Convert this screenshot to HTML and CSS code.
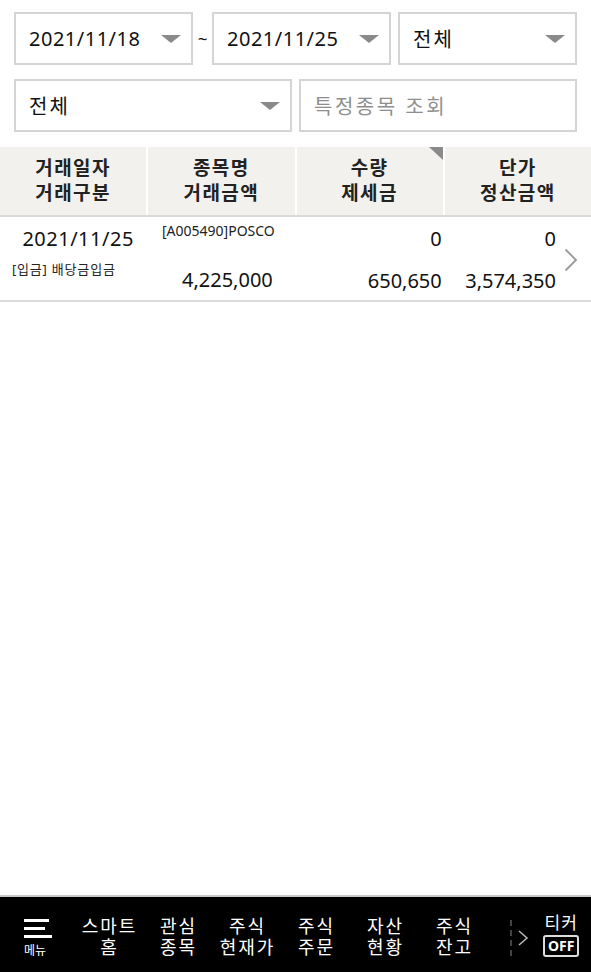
FILE: index.html
```html
<!DOCTYPE html>
<html lang="ko">
<head>
  <meta charset="UTF-8">
  <meta name="viewport" content="width=device-width, initial-scale=1.0">
  <title>거래내역</title>
  <link rel="stylesheet" href="styles.css">
</head>
<body>
  <div class="page">
    <section class="filters">
      <div class="filter-row">
        <div class="box date-box">
          <span class="date">2021/11/18</span>
          <span class="arrow"></span>
        </div>
        <span class="tilde">~</span>
        <div class="box date-box">
          <span class="date">2021/11/25</span>
          <span class="arrow"></span>
        </div>
        <div class="box kind-box">
          <span class="ko">전체</span>
          <span class="arrow"></span>
        </div>
      </div>
      <div class="filter-row">
        <div class="box half-box">
          <span class="ko">전체</span>
          <span class="arrow"></span>
        </div>
        <div class="box half-box search-box">
          <span class="placeholder">특정종목 조회</span>
        </div>
      </div>
    </section>

    <section class="table">
      <div class="table-head">
        <div class="th">거래일자<br>거래구분</div>
        <div class="th">종목명<br>거래금액</div>
        <div class="th th-sort">수량<br>제세금<span class="corner"></span></div>
        <div class="th">단가<br>정산금액</div>
      </div>

      <div class="table-row">
        <div class="td td-date">
          <span class="date">2021/11/25</span>
          <span class="small type">[입금] 배당금입금</span>
        </div>
        <div class="td td-name">
          <span class="small code">[A005490]POSCO</span>
          <span class="amount">4,225,000</span>
        </div>
        <div class="td td-num">
          <span>0</span>
          <span>650,650</span>
        </div>
        <div class="td td-last">
          <div class="td-num">
            <span>0</span>
            <span>3,574,350</span>
          </div>
          <svg class="chevron" width="14" height="24" viewBox="0 0 14 24">
            <path d="M1.5 1.5 L12 12 L1.5 22.5" fill="none" stroke="#999" stroke-width="1.8"/>
          </svg>
        </div>
      </div>
    </section>
  </div>

  <nav class="bottom-nav">
    <div class="nav-menu">
      <svg width="30" height="22" viewBox="0 0 30 22">
        <rect x="1" y="1" width="25" height="3" fill="#fff"/>
        <rect x="1" y="9" width="21" height="3" fill="#fff"/>
        <rect x="1" y="17" width="28" height="3" fill="#fff"/>
      </svg>
      <span class="menu-label">메뉴</span>
    </div>
    <div class="nav-item">스마트<br>홈</div>
    <div class="nav-item">관심<br>종목</div>
    <div class="nav-item">주식<br>현재가</div>
    <div class="nav-item">주식<br>주문</div>
    <div class="nav-item">자산<br>현황</div>
    <div class="nav-item">주식<br>잔고</div>
    <div class="nav-cut"></div>
    <svg class="nav-more" width="12" height="18" viewBox="0 0 12 18">
      <path d="M2 2 L10 9 L2 16" fill="none" stroke="#bbb" stroke-width="1.5"/>
    </svg>
    <div class="ticker">
      <span>티커</span>
      <span class="off">OFF</span>
    </div>
  </nav>
</body>
</html>
```

FILE: styles.css
```css
body {
  margin: 0;
  padding: 0;
  background: #fff;
  color: #111;
  font-family: "Noto Sans", "Noto Sans CJK KR", sans-serif;
  width: 591px;
  height: 972px;
  display: flex;
  flex-direction: column;
  overflow: hidden;
}

.page {
  flex: 1;
}

/* filters */
.filters {
  padding: 12px 14px 0 14px;
  display: flex;
  flex-direction: column;
  gap: 14px;
}

.filter-row {
  display: flex;
  align-items: center;
}

.box {
  box-sizing: border-box;
  height: 53px;
  border: 2px solid #d4d4d4;
  display: flex;
  align-items: center;
  justify-content: space-between;
  padding: 0 10px 0 13px;
  font-size: 20px;
  color: #111;
}

.date {
  letter-spacing: 0.5px;
}

.ko {
  letter-spacing: 2px;
}

.date-box {
  width: 179px;
}

.tilde {
  width: 19px;
  text-align: center;
  font-size: 17px;
}

.kind-box {
  width: 179px;
  margin-left: 7px;
}

.half-box {
  width: 278px;
}

.search-box {
  margin-left: 7px;
}

.placeholder {
  color: #8e8e8e;
  letter-spacing: 2.5px;
}

.arrow {
  width: 0;
  height: 0;
  border-left: 10px solid transparent;
  border-right: 10px solid transparent;
  border-top: 8px solid #8a8a8a;
}

/* table */
.table {
  margin-top: 15px;
}

.table-head {
  display: grid;
  grid-template-columns: repeat(4, 1fr);
  gap: 2px;
  border-bottom: 2px solid #dadada;
}

.th {
  position: relative;
  height: 68px;
  background: #f2f1ed;
  display: flex;
  align-items: center;
  justify-content: center;
  text-align: center;
  font-size: 19px;
  font-weight: bold;
  line-height: 25px;
  letter-spacing: 1.5px;
  color: #222;
}

.corner {
  position: absolute;
  top: 0;
  right: 0;
  width: 0;
  height: 0;
  border-top: 13px solid #8a8a8a;
  border-left: 14px solid transparent;
}

.table-row {
  display: grid;
  grid-template-columns: repeat(4, 1fr);
  gap: 2px;
  height: 83px;
  border-bottom: 2px solid #dadada;
}

.td {
  display: flex;
  flex-direction: column;
  font-size: 20px;
  line-height: 26px;
}

.small {
  font-size: 13px;
  line-height: 18px;
  color: #222;
}

.td-date .date {
  margin-top: 9px;
  text-align: center;
  padding-left: 10px;
}

.td-date .type {
  margin-top: 8px;
  padding-left: 12px;
  letter-spacing: 0.8px;
}

.td-name {
  align-items: center;
}

.td-name .code {
  margin-top: 5px;
  padding-right: 6px;
  font-size: 14px;
}

.td-name .amount {
  margin-top: 27px;
  padding-left: 12px;
}

.td-num {
  align-items: flex-end;
  padding-top: 9px;
  padding-right: 1px;
  gap: 16px;
  display: flex;
  flex-direction: column;
}

.td-last {
  flex-direction: row;
  align-items: stretch;
}

.td-last .td-num {
  flex: 1;
}

.chevron {
  margin: 31px 13px 0 7px;
}

/* bottom nav */
.bottom-nav {
  height: 75px;
  background: #000;
  border-top: 2px solid #c8c8c8;
  display: flex;
  align-items: center;
  color: #fff;
}

.nav-menu {
  width: 75px;
  display: flex;
  flex-direction: column;
  align-items: flex-start;
  padding-left: 23px;
  box-sizing: border-box;
  margin-top: 6px;
}

.menu-label {
  font-size: 12px;
  line-height: 14px;
  margin-top: 4px;
  padding-left: 1px;
}

.nav-item {
  width: 69px;
  text-align: center;
  font-size: 18px;
  line-height: 21px;
  letter-spacing: 2px;
  margin-top: 4px;
}

.nav-cut {
  width: 2px;
  height: 36px;
  margin-left: 21px;
  margin-top: 6px;
  border-left: 2px dashed #444;
  box-sizing: border-box;
}

.nav-more {
  margin-left: 5px;
  margin-top: 6px;
}

.ticker {
  margin-left: 14px;
  display: flex;
  flex-direction: column;
  align-items: center;
  font-size: 17px;
  line-height: 21px;
  letter-spacing: 1px;
}

.off {
  margin-top: 2px;
  border: 2px solid #ddd;
  border-radius: 3px;
  font-size: 14px;
  font-weight: bold;
  line-height: 16px;
  letter-spacing: 0;
  padding: 1px 3px;
}
```
